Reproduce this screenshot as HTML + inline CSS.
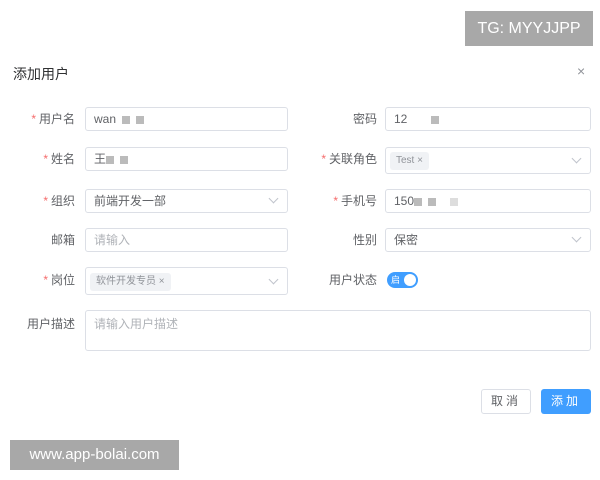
<!DOCTYPE html>
<html><head><meta charset="utf-8"><style>
body{margin:0;width:600px;height:480px;background:#fff;position:relative;font-family:"Liberation Sans","Noto Sans CJK SC",sans-serif;font-size:12px;color:#606266;overflow:hidden}
.a{position:absolute}
.in{position:absolute;border:1px solid #dcdfe6;border-radius:3px;box-sizing:border-box;background:#fff}
.lab{position:absolute;text-align:right;width:80px;line-height:24px}
.lab i{color:#f56c6c;font-style:normal;margin-right:3px}
.tx{position:absolute;left:8px;top:0;line-height:22px;color:#606266}
.ph{color:#b0b3b8}
.ar{position:absolute;right:10px;top:5px;width:6px;height:6px;border-right:1px solid #c0c4cc;border-bottom:1px solid #c0c4cc;transform:rotate(45deg)}
.tag{position:absolute;top:4px;left:4px;height:18px;line-height:18px;background:#f0f2f5;color:#909399;font-size:10px;padding:0 6px;border-radius:3px}
.blk{display:inline-block;width:8px;height:8px;background:#bbb;margin-left:6px;vertical-align:middle}
</style></head><body>
<div class="a" style="left:465px;top:11px;width:128px;height:35px;background:#a8a8a8;color:#fff;font-size:16px;line-height:35px;text-align:center">TG: MYYJJPP</div>
<div class="a" style="left:13px;top:64px;font-size:14px;color:#303133;line-height:20px">添加用户</div>
<div class="a" style="left:577px;top:63px;font-size:14px;color:#909399">×</div>

<div class="lab" style="left:-5px;top:107px"><i>*</i>用户名</div>
<div class="in" style="left:85px;top:107px;width:203px;height:24px"><span class="tx">wan<span class="blk"></span><span class="blk"></span></span></div>
<div class="lab" style="left:297px;top:107px">密码</div>
<div class="in" style="left:385px;top:107px;width:206px;height:24px"><span class="tx">12<span class="blk" style="margin-left:24px"></span></span></div>

<div class="lab" style="left:-5px;top:147px"><i>*</i>姓名</div>
<div class="in" style="left:85px;top:147px;width:203px;height:24px"><span class="tx">王<span class="blk" style="margin-left:0"></span><span class="blk"></span></span></div>
<div class="lab" style="left:297px;top:147px"><i>*</i>关联角色</div>
<div class="in" style="left:385px;top:147px;width:206px;height:27px"><span class="tag">Test ×</span><span class="ar" style="top:7px"></span></div>

<div class="lab" style="left:-5px;top:189px"><i>*</i>组织</div>
<div class="in" style="left:85px;top:189px;width:203px;height:24px"><span class="tx">前端开发一部</span><span class="ar"></span></div>
<div class="lab" style="left:297px;top:189px"><i>*</i>手机号</div>
<div class="in" style="left:385px;top:189px;width:206px;height:24px"><span class="tx">150<span class="blk" style="margin-left:0"></span><span class="blk"></span><span class="blk" style="background:#ddd;margin-left:14px"></span></span></div>

<div class="lab" style="left:-5px;top:228px">邮箱</div>
<div class="in" style="left:85px;top:228px;width:203px;height:24px"><span class="tx ph">请输入</span></div>
<div class="lab" style="left:297px;top:228px">性别</div>
<div class="in" style="left:385px;top:228px;width:206px;height:24px"><span class="tx">保密</span><span class="ar"></span></div>

<div class="lab" style="left:-5px;top:268px"><i>*</i>岗位</div>
<div class="in" style="left:85px;top:267px;width:203px;height:28px"><span class="tag" style="top:5px">软件开发专员 ×</span><span class="ar" style="top:8px"></span></div>
<div class="lab" style="left:297px;top:268px">用户状态</div>
<div class="a" style="left:387px;top:272px;width:31px;height:16px;border-radius:8px;background:#409eff"><span class="a" style="left:4px;top:1px;color:#fff;font-size:9px;line-height:14px">启</span><span class="a" style="right:2px;top:2px;width:12px;height:12px;border-radius:50%;background:#fff"></span></div>

<div class="lab" style="left:-5px;top:312px">用户描述</div>
<div class="in" style="left:85px;top:310px;width:506px;height:41px"><span class="tx ph" style="top:2px">请输入用户描述</span></div>

<div class="in" style="left:481px;top:389px;width:50px;height:25px;text-align:center;line-height:23px;color:#606266;letter-spacing:3px">取消</div>
<div class="a" style="left:541px;top:389px;width:50px;height:25px;border-radius:3px;background:#409eff;color:#fff;text-align:center;line-height:25px;letter-spacing:3px">添加</div>

<div class="a" style="left:10px;top:440px;width:169px;height:30px;background:#a8a8a8;color:#fff;font-size:15px;line-height:30px;text-align:center">www.app-bolai.com</div>
</body></html>
